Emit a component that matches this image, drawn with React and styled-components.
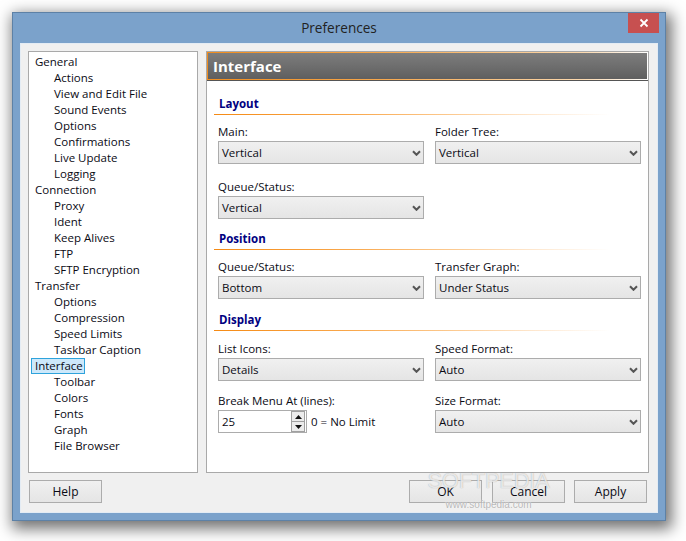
import React from "react";
import styled, { createGlobalStyle } from "styled-components";

const Global = createGlobalStyle`
  html, body { margin: 0; padding: 0; background: #fff; }
  body { padding: 12px; width: 686px; height: 541px; box-sizing: border-box; overflow: hidden;
    font-family: "Open Sans", "Noto Sans", "Liberation Sans", sans-serif; font-size: 11.5px; color: #0a0a14; }
`;

const Win = styled.div`
  position: relative; box-sizing: border-box; width: 654px; height: 509px;
  background: #7ba2cb; border: 1px solid #5d81a6;
  box-shadow: 3px 5px 14px 3px rgba(0,0,0,.55);
  padding: 0 7px 7px; display: flex; flex-direction: column;
`;
const TitleBar = styled.div`
  height: 30px; display: flex; align-items: center; justify-content: center;
  font-size: 13.6px; color: #222; flex: none; padding-bottom: 1px; box-sizing: border-box;
`;
const Close = styled.div`
  position: absolute; top: 0; right: 6px; width: 31px; height: 20px; background: #c75050;
  display: flex; align-items: center; justify-content: center;
`;
const Client = styled.div`
  flex: 1; box-sizing: border-box; background: #f0f0f0; border: 1px solid #e4ecf4;
  padding: 7px 8px 9px 7px; display: flex; flex-direction: column; gap: 7px;
`;
const Main = styled.div`display: flex; gap: 8px; height: 422px; flex: none;`;
const Tree = styled.div`
  box-sizing: border-box; width: 170px; background: #fff; border: 1px solid #a9a9a9;
  padding: 2px 0 0 2px;
`;
const Node = styled.div`
  height: 16px; line-height: 15px; box-sizing: border-box; width: fit-content; white-space: nowrap;
  margin-left: ${p => (p.$child ? 19 : 0)}px;
  padding: 0 ${p => (p.$sel ? 2 : 4)}px 0 4px;
  ${p => p.$sel && "background:#cde8fa; outline:1px solid #2ea3dc; outline-offset:-1px;"}
`;
const Panel = styled.div`
  box-sizing: border-box; width: 443px; background: #fff; border: 1px solid #a9a9a9;
  position: relative; overflow: hidden;
`;
const Header = styled.div`
  box-sizing: border-box; height: 28px; display: flex; align-items: center; padding: 0 0 1px 5px;
  background: linear-gradient(#7d7d7d, #5f5f5f);
  border: 1px solid transparent;
  border-image: linear-gradient(90deg, #f18d1e 0%, #f7a84d 40%, #fcd9ae 85%, #fff 100%) 1;
  color: #fff; font-weight: 700; font-size: 15px;
`;
const HeaderEdge = styled.div`height: 1px; background: #555;`;
const Body = styled.div`padding: 0 7px;`;
const Section = styled.div`margin-top: ${p => p.$top}px;`;
const SectionTitle = styled.div`
  height: 16px; line-height: 15px; padding-left: 5px; font-weight: 700; font-size: 11.5px; color: #00007f;
`;
const Rule = styled.div`
  height: 1px; margin-top: 2px; width: 396px;
  background: linear-gradient(90deg, #f58a14 0%, #f9a84d 35%, #fcc98f 60%, #fee6cc 80%, #fff 100%);
`;
const Grid = styled.div`
  display: grid; grid-template-columns: 206px 206px; column-gap: 11px; row-gap: ${p => p.$gap}px;
  margin: ${p => p.$top}px 0 0 4px;
`;
const Field = styled.div`display: flex; flex-direction: column; gap: 1px;`;
const Label = styled.div`height: 16px; line-height: 16px; white-space: nowrap;`;
const SelectBox = styled.div`
  box-sizing: border-box; height: 23px; border: 1px solid #acacac;
  background: linear-gradient(#f0f0f0, #e5e5e5);
  display: flex; align-items: center; justify-content: space-between; padding: 0 2px 1px 3px;
`;
const SpinRow = styled.div`display: flex; align-items: center; gap: 4px;`;
const SpinInput = styled.div`
  box-sizing: border-box; width: 89px; height: 23px; border: 1px solid #acacac; background: #fff;
  display: flex; align-items: center; justify-content: space-between; padding: 1px 1px 1px 3px;
`;
const SpinButtons = styled.div`
  display: flex; flex-direction: column; width: 12px; height: 19px; border: 1px solid #a0a0a0;
`;
const SpinBtn = styled.div`
  flex: 1; background: #ececec; display: flex; align-items: center; justify-content: center;
  & + & { border-top: 1px solid #a0a0a0; }
`;
const Footer = styled.div`display: flex; padding-left: 1px; height: 23px;`;
const Btn = styled.div`
  box-sizing: border-box; width: 73px; height: 23px; border: 1px solid #acacac;
  background: linear-gradient(#f0f0f0, #e5e5e5); display: flex; align-items: center; justify-content: center;
  margin-left: ${p => p.$ml || 0}px; font-size: 12px;
`;
const Mark = styled.div`
  position: absolute; left: 413px; top: 458px; width: 125px; pointer-events: none; text-align: center;
  font-family: "Liberation Sans", sans-serif;
`;
const MarkBig = styled.div`
  font-size: 22px; line-height: 20px; white-space: nowrap; letter-spacing: -.3px;
  color: rgba(255,255,255,.72); text-shadow: 0 0 1px rgba(110,110,110,.6);
`;
const MarkSmall = styled.div`
  font-size: 10px; line-height: 12px; margin-top: 8px; white-space: nowrap;
  color: rgba(170,170,170,.85); text-shadow: 0 0 1px #fff;
`;

const Chevron = () => (
  <svg width="9" height="7" viewBox="0 0 9 7"><path d="M1 2.2 L4.5 5.8 L8 2.2" fill="none" stroke="#555" strokeWidth="2" /></svg>
);
const Select = ({ v }) => <SelectBox><span>{v}</span><Chevron /></SelectBox>;
const F = ({ l, v }) => <Field><Label>{l}</Label><Select v={v} /></Field>;

const tree = [
  ["General"], ["Actions", 1], ["View and Edit File", 1], ["Sound Events", 1], ["Options", 1], ["Confirmations", 1],
  ["Live Update", 1], ["Logging", 1], ["Connection"], ["Proxy", 1], ["Ident", 1], ["Keep Alives", 1], ["FTP", 1],
  ["SFTP Encryption", 1], ["Transfer"], ["Options", 1], ["Compression", 1], ["Speed Limits", 1], ["Taskbar Caption", 1],
  ["Interface", 0, 1], ["Toolbar", 1], ["Colors", 1], ["Fonts", 1], ["Graph", 1], ["File Browser", 1],
];

export default function App() {
  return (
    <>
      <Global />
      <Win>
        <TitleBar>Preferences</TitleBar>
        <Close>
          <svg width="10" height="10" viewBox="0 0 10 10"><path d="M1.5 1.5 L8.5 8.5 M8.5 1.5 L1.5 8.5" stroke="#fff" strokeWidth="1.8" /></svg>
        </Close>
        <Client>
          <Main>
            <Tree>
              {tree.map(([t, c, s], i) => <Node key={i} $child={!!c} $sel={!!s}>{t}</Node>)}
            </Tree>
            <Panel>
              <Header>Interface</Header>
              <HeaderEdge />
              <Body>
                <Section $top={15}>
                  <SectionTitle>Layout</SectionTitle>
                  <Rule />
                  <Grid $top={9} $gap={15}>
                    <F l="Main:" v="Vertical" />
                    <F l="Folder Tree:" v="Vertical" />
                    <F l="Queue/Status:" v="Vertical" />
                  </Grid>
                </Section>
                <Section $top={12}>
                  <SectionTitle>Position</SectionTitle>
                  <Rule />
                  <Grid $top={9} $gap={15}>
                    <F l="Queue/Status:" v="Bottom" />
                    <F l="Transfer Graph:" v="Under Status" />
                  </Grid>
                </Section>
                <Section $top={13}>
                  <SectionTitle>Display</SectionTitle>
                  <Rule />
                  <Grid $top={10} $gap={12}>
                    <F l="List Icons:" v="Details" />
                    <F l="Speed Format:" v="Auto" />
                    <Field>
                      <Label>Break Menu At (lines):</Label>
                      <SpinRow>
                        <SpinInput>
                          <span>25</span>
                          <SpinButtons>
                            <SpinBtn><svg width="7" height="4" viewBox="0 0 7 4"><path d="M3.5 0 L7 4 L0 4 Z" fill="#111" /></svg></SpinBtn>
                            <SpinBtn><svg width="7" height="4" viewBox="0 0 7 4"><path d="M0 0 L7 0 L3.5 4 Z" fill="#111" /></svg></SpinBtn>
                          </SpinButtons>
                        </SpinInput>
                        <span>0 = No Limit</span>
                      </SpinRow>
                    </Field>
                    <F l="Size Format:" v="Auto" />
                  </Grid>
                </Section>
              </Body>
            </Panel>
          </Main>
          <Footer>
            <Btn>Help</Btn>
            <Btn $ml={307}>OK</Btn>
            <Btn $ml={10}>Cancel</Btn>
            <Btn $ml={9}>Apply</Btn>
          </Footer>
        </Client>
        <Mark>
          <MarkBig>SOFTPEDIA</MarkBig>
          <MarkSmall>www.softpedia.com</MarkSmall>
        </Mark>
      </Win>
    </>
  );
}
